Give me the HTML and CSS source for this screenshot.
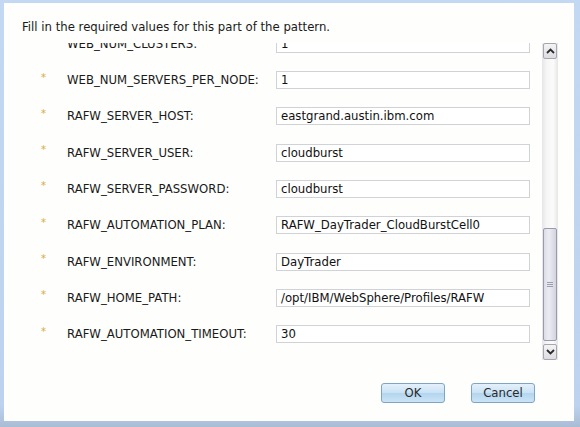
FILE: index.html
```html
<!DOCTYPE html>
<html>
<head>
<meta charset="utf-8">
<link rel="stylesheet" href="styles.css">
</head>
<body>
<div class="frame">
  <div class="panel">
    <div class="intro">Fill in the required values for this part of the pattern.</div>
    <div class="scroller">
      <div class="viewport">
        <div class="list">
          <div class="row"><span class="req">*</span><span class="label">WEB_NUM_CLUSTERS:</span><div class="field">1</div></div>
          <div class="row"><span class="req">*</span><span class="label">WEB_NUM_SERVERS_PER_NODE:</span><div class="field">1</div></div>
          <div class="row"><span class="req">*</span><span class="label">RAFW_SERVER_HOST:</span><div class="field">eastgrand.austin.ibm.com</div></div>
          <div class="row"><span class="req">*</span><span class="label">RAFW_SERVER_USER:</span><div class="field">cloudburst</div></div>
          <div class="row"><span class="req">*</span><span class="label">RAFW_SERVER_PASSWORD:</span><div class="field">cloudburst</div></div>
          <div class="row"><span class="req">*</span><span class="label">RAFW_AUTOMATION_PLAN:</span><div class="field">RAFW_DayTrader_CloudBurstCell0</div></div>
          <div class="row"><span class="req">*</span><span class="label">RAFW_ENVIRONMENT:</span><div class="field">DayTrader</div></div>
          <div class="row"><span class="req">*</span><span class="label">RAFW_HOME_PATH:</span><div class="field">/opt/IBM/WebSphere/Profiles/RAFW</div></div>
          <div class="row"><span class="req">*</span><span class="label">RAFW_AUTOMATION_TIMEOUT:</span><div class="field">30</div></div>
        </div>
      </div>
      <div class="scrollbar">
        <div class="sb-btn"><svg width="9" height="6" viewBox="0 0 9 6"><path d="M1 5 L4.5 1.5 L8 5" fill="none" stroke="#2b2b2b" stroke-width="1.8"/></svg></div>
        <div class="sb-track">
          <div class="sb-thumb"><div class="grip"></div></div>
        </div>
        <div class="sb-btn"><svg width="9" height="6" viewBox="0 0 9 6"><path d="M1 1 L4.5 4.5 L8 1" fill="none" stroke="#2b2b2b" stroke-width="1.8"/></svg></div>
      </div>
    </div>
    <div class="actions">
      <button class="btn">OK</button>
      <button class="btn">Cancel</button>
    </div>
  </div>
</div>
</body>
</html>
```
FILE: styles.css
```css
html, body {
  margin: 0;
  padding: 0;
}
body {
  width: 580px;
  height: 427px;
  overflow: hidden;
  background: #b9cde6;
  font-family: "DejaVu Sans", Verdana, sans-serif;
  font-size: 11.7px;
  color: #1a1a1a;
}
.frame {
  width: 580px;
  height: 427px;
  box-sizing: border-box;
  padding: 3px 6px 6px 4px;
  background: linear-gradient(#c3d8f2, #bcd2ee 95%, #a9bcd4);
}
.panel {
  height: 418px;
  background: #fefefc;
  display: flex;
  flex-direction: column;
}
.intro {
  height: 38px;
  box-sizing: border-box;
  padding: 17px 0 0 18px;
  line-height: 14px;
}
.scroller {
  height: 320px;
  display: flex;
  padding-right: 16px;
}
.viewport {
  flex: 1;
  overflow: hidden;
  margin-top: 2px;
}
.list {
  margin-top: -17.4px;
}
.row {
  height: 36.3px;
  display: flex;
  align-items: center;
}
.req {
  width: 26px;
  padding-left: 37px;
  color: #d9a93a;
  font-size: 10px;
  position: relative;
  top: -3px;
}
.label {
  width: 209px;
}
.field {
  width: 254px;
  height: 18px;
  box-sizing: border-box;
  border: 1px solid #cfd3d8;
  background: #fff;
  padding-left: 4px;
  line-height: 16px;
  color: #111;
}
.scrollbar {
  width: 16px;
  margin: 2px 0 1px 0;
  display: flex;
  flex-direction: column;
  background: linear-gradient(90deg, #e6e6e8, #f6f6f7 30%, #fbfbfb 70%, #e6e6e8);
}
.sb-btn {
  height: 16px;
  box-sizing: border-box;
  margin: 0 1px;
  border: 1px solid #a6a6ad;
  border-radius: 2px;
  background: linear-gradient(#f4f4f6, #dcdce2);
  display: flex;
  align-items: center;
  justify-content: center;
}
.sb-track {
  flex: 1;
  display: flex;
  flex-direction: column;
  justify-content: flex-end;
  padding: 0 0 3px 0;
}
.sb-thumb {
  height: 113px;
  margin: 0 1px;
  box-sizing: border-box;
  border: 1px solid #9a9aab;
  border-radius: 2px;
  background: linear-gradient(90deg, #dcdce8, #ececf4 40%, #d3d3e0);
  display: flex;
  align-items: center;
  justify-content: center;
}
.grip {
  width: 6px;
  height: 5px;
  background: repeating-linear-gradient(#9d9db0 0 1px, transparent 1px 2px);
}
.actions {
  display: flex;
  justify-content: flex-end;
  gap: 26px;
  padding: 22px 39px 0 0;
}
.btn {
  width: 64px;
  height: 20px;
  box-sizing: border-box;
  border: 1px solid #7fa4c4;
  border-radius: 3px;
  background: linear-gradient(#e4f1fb, #c9e2f5 50%, #b3d5ef 52%, #cbe4f6);
  font-family: "DejaVu Sans", Verdana, sans-serif;
  font-size: 11.7px;
  color: #2a2a2a;
  padding: 0;
}
```
